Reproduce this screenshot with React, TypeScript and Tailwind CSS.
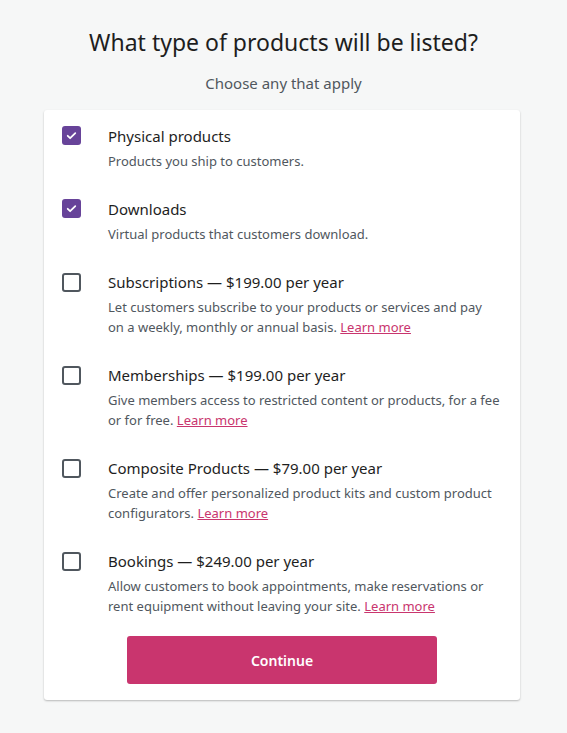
import React, { useState } from 'react';

const products = [
  {
    title: 'Physical products',
    lines: ['Products you ship to customers.'],
    checked: true,
  },
  {
    title: 'Downloads',
    lines: ['Virtual products that customers download.'],
    checked: true,
  },
  {
    title: 'Subscriptions — $199.00 per year',
    lines: ['Let customers subscribe to your products or services and pay', 'on a weekly, monthly or annual basis.'],
    learn: true,
  },
  {
    title: 'Memberships — $199.00 per year',
    lines: ['Give members access to restricted content or products, for a fee', 'or for free.'],
    learn: true,
  },
  {
    title: 'Composite Products — $79.00 per year',
    lines: ['Create and offer personalized product kits and custom product', 'configurators.'],
    learn: true,
  },
  {
    title: 'Bookings — $249.00 per year',
    lines: ['Allow customers to book appointments, make reservations or', 'rent equipment without leaving your site.'],
    learn: true,
  },
];

const Checkbox = ({ checked, onClick }: { checked: boolean; onClick: () => void }) => (
  <button
    onClick={onClick}
    className={
      checked
        ? 'w-[19px] h-[19px] rounded-[3px] bg-[#674399] flex items-center justify-center'
        : 'w-[19px] h-[19px] rounded-[3px] border-2 border-[#50575e] bg-white'
    }
  >
    {checked && (
      <svg width="13" height="13" viewBox="0 0 24 24" fill="none">
        <path d="M5 12.5l4.5 4.5L19 7.5" stroke="white" strokeWidth="3.2" strokeLinecap="round" strokeLinejoin="round" />
      </svg>
    )}
  </button>
);

const App = () => {
  const [checked, setChecked] = useState(products.map((p) => !!p.checked));

  const toggle = (i: number) => setChecked((c) => c.map((v, j) => (j === i ? !v : v)));

  return (
    <div className="min-h-[733px] bg-[#f6f7f7] pt-[26px] font-['Noto_Sans',sans-serif]">
      <h1 className="text-center text-[23px] leading-[32px] text-[#1e1e1e]">What type of products will be listed?</h1>
      <p className="text-center text-[15px] leading-[24px] text-[#50575e] mt-[13px]">Choose any that apply</p>

      <div className="ml-[44px] mr-[47px] mt-[15px] bg-white rounded-[3px] shadow-[0_1px_2px_rgba(0,0,0,0.25)] pt-[14px] pb-[16px] px-[18px]">
        <div className="flex flex-col gap-[26px]">
          {products.map((p, i) => (
            <div key={i} className="flex">
              <div className="w-[46px] pt-[2px]">
                <Checkbox checked={checked[i]} onClick={() => toggle(i)} />
              </div>
              <div>
                <div className="text-[15px] leading-[24px] text-[#1e1e1e]">{p.title}</div>
                <div className="mt-[3px] text-[13px] leading-[20px] text-[#50575e] whitespace-nowrap">
                  {p.lines.map((l, k) => (
                    <div key={k}>
                      {l}
                      {p.learn && k === p.lines.length - 1 && (
                        <>
                          {' '}
                          <a href="#" className="text-[#c9356e] underline">Learn more</a>
                        </>
                      )}
                    </div>
                  ))}
                </div>
              </div>
            </div>
          ))}
        </div>

        <div className="flex justify-center mt-[20px]">
          <button className="w-[310px] h-[48px] rounded-[3px] bg-[#c9356e] text-white text-[14px] font-semibold">
            Continue
          </button>
        </div>
      </div>
    </div>
  );
};

export default App;
